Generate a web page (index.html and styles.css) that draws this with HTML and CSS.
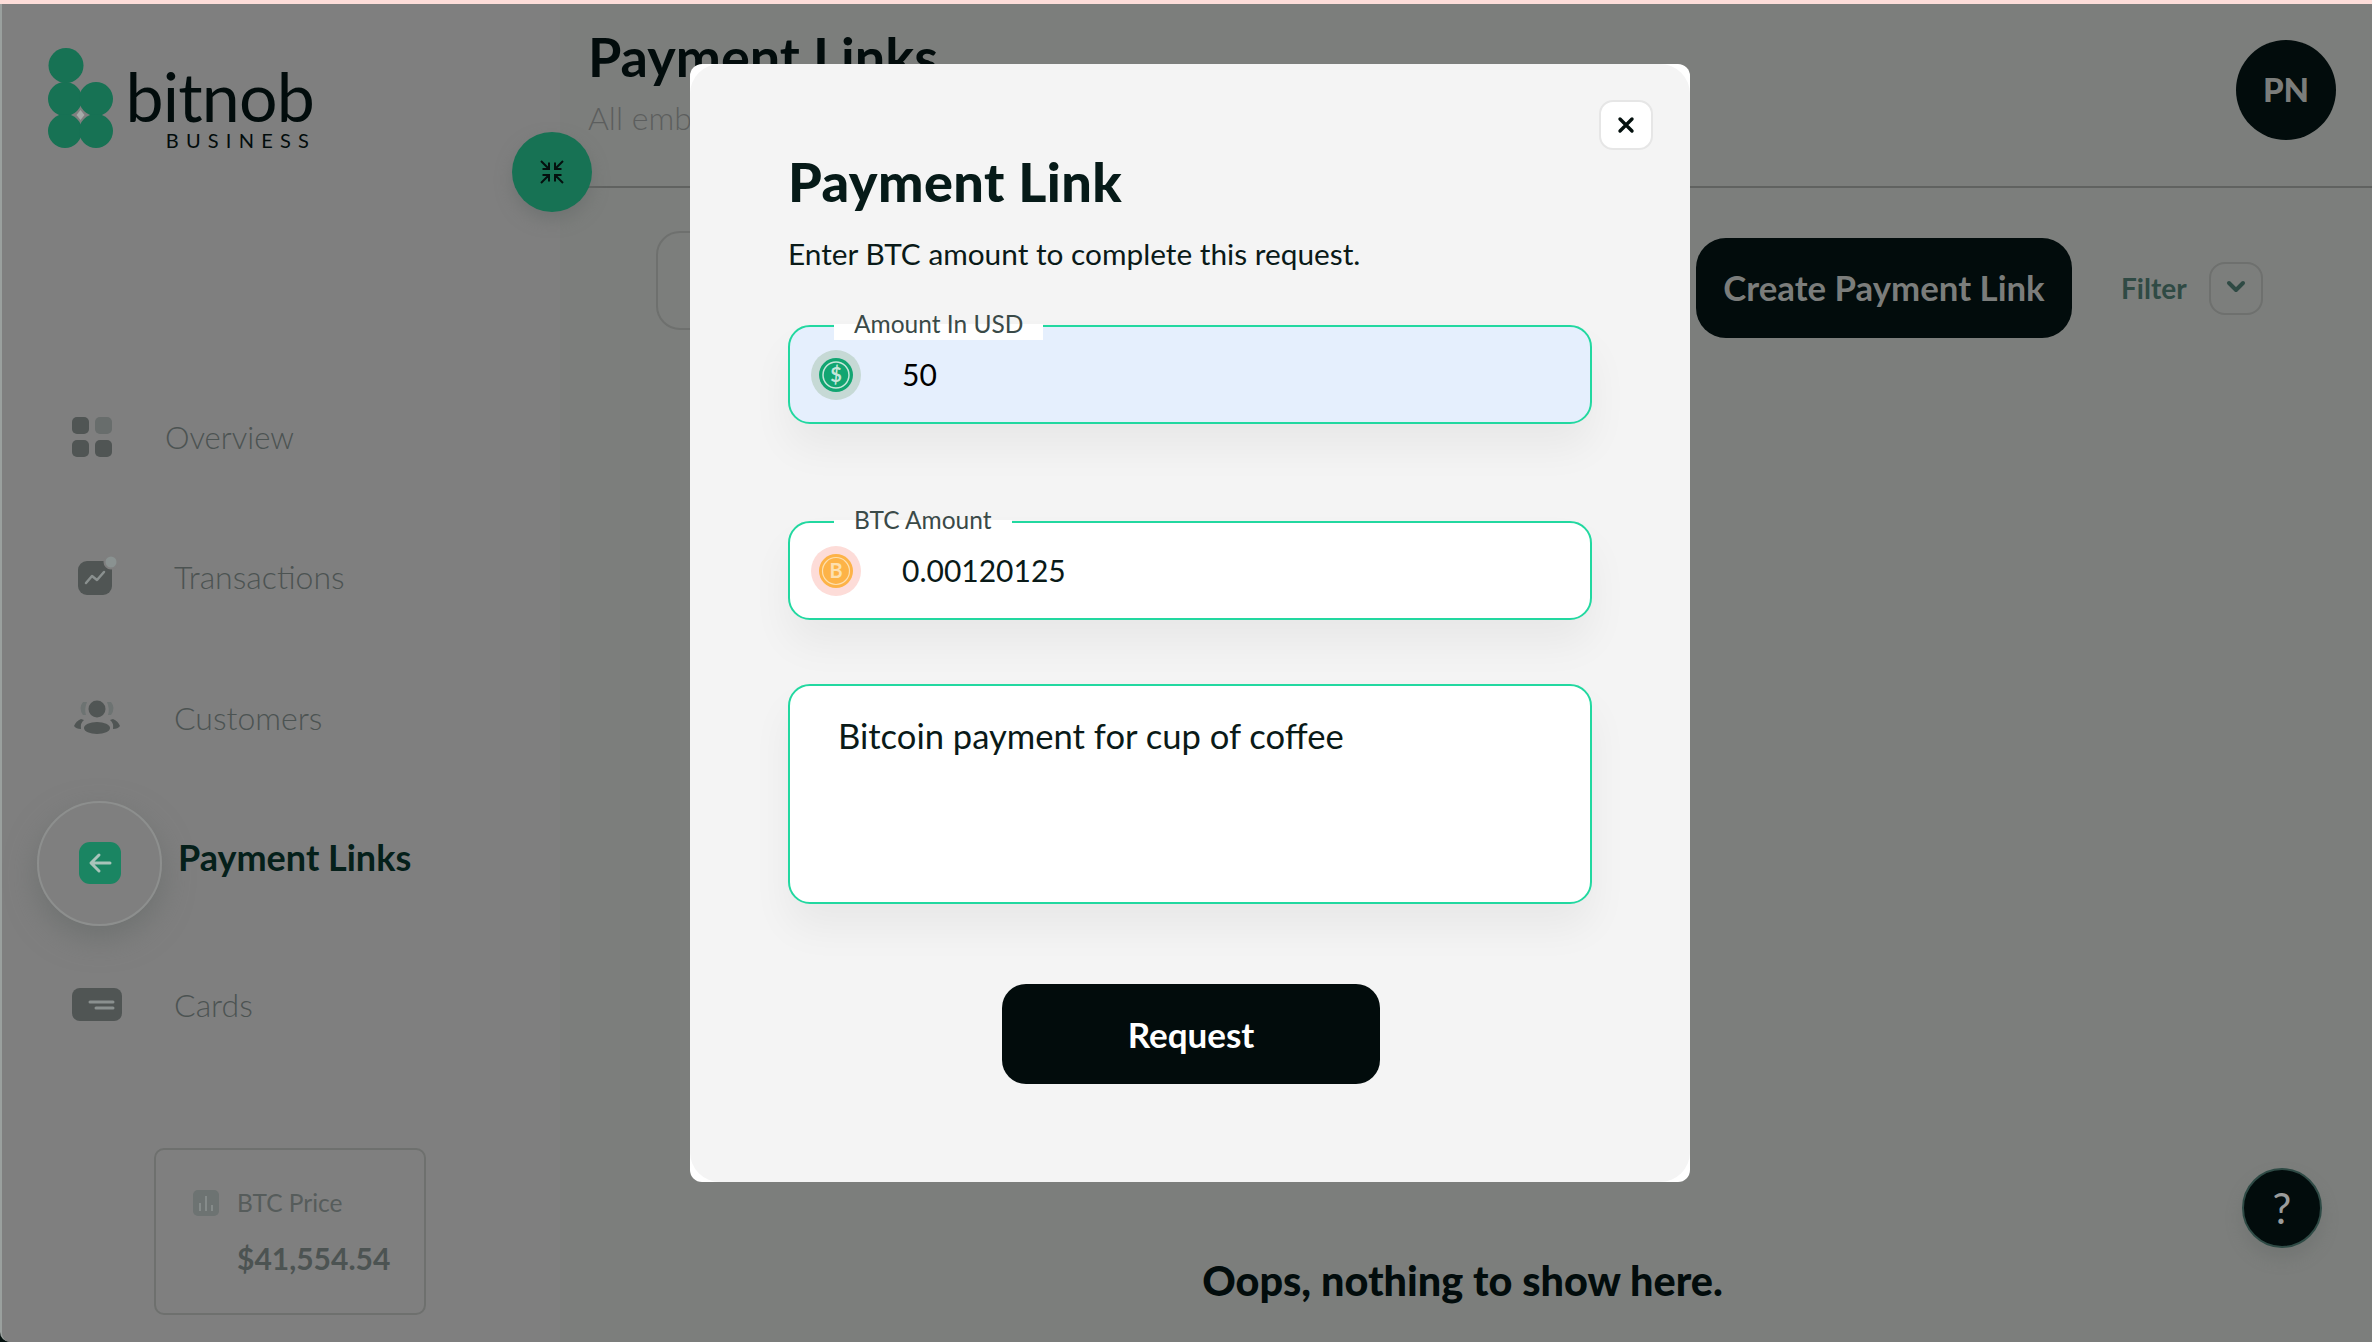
FILE: index.html
```html
<!DOCTYPE html>
<html lang="en">
<head>
  <meta charset="UTF-8">
  <meta name="viewport" content="width=device-width, initial-scale=1.0">
  <title>Payment Links</title>
  <link rel="stylesheet" href="styles.css">
</head>
<body>
  <div class="top-strip"></div>

  <div class="app">
    <!-- Sidebar -->
    <aside class="sidebar">
      <div class="logo">
        <svg class="logo-mark" width="66" height="100" viewBox="0 0 66 100">
          <g fill="#177254">
            <ellipse cx="18" cy="17.5" rx="17.5" ry="17.5"/>
            <ellipse cx="17" cy="51" rx="17" ry="17"/>
            <ellipse cx="48" cy="51" rx="17" ry="17"/>
            <ellipse cx="17" cy="83" rx="17" ry="17"/>
            <ellipse cx="48" cy="83" rx="17" ry="17"/>
          </g>
          <path d="M32.500 62 l4 5 -4 5 -4 -5z" fill="#a5aaa8"/>
        </svg>
        <div class="logo-text">
          <span class="logo-name">bitnob</span>
          <span class="logo-sub">BUSINESS</span>
        </div>
      </div>

      <nav class="nav">
        <a class="nav-item nav-overview">
          <svg width="40" height="40" viewBox="0 0 40 40">
            <rect x="0" y="0" width="17" height="17" rx="5" fill="#505554"/>
            <rect x="23" y="0" width="17" height="17" rx="5" fill="#686d6c"/>
            <rect x="0" y="23" width="17" height="17" rx="5" fill="#505554"/>
            <rect x="23" y="23" width="17" height="17" rx="5" fill="#505554"/>
          </svg>
          <span>Overview</span>
        </a>
        <a class="nav-item nav-transactions">
          <svg width="40" height="40" viewBox="0 0 40 40">
            <rect x="0" y="5" width="34" height="34" rx="9" fill="#505554"/>
            <circle cx="33" cy="6" r="6.500" fill="#8a9291" stroke="#7f7f7f" stroke-width="2"/>
            <path d="M8 27 l6 -7 5 4 7 -8" fill="none" stroke="#8a908f" stroke-width="2.500" stroke-linecap="round" stroke-linejoin="round"/>
          </svg>
          <span>Transactions</span>
        </a>
        <a class="nav-item nav-customers">
          <svg width="46" height="34" viewBox="0 0 46 34">
            <path d="M9 2 q-5 6 0 13 h3 q-2 -6 1 -13z M37 2 q5 6 0 13 h-3 q2 -6 -1 -13z" fill="#6d7372"/>
            <circle cx="23" cy="9" r="8.500" fill="#505554"/>
            <ellipse cx="23" cy="28" rx="13" ry="6" fill="#505554"/>
            <path d="M7 19 q-5 2 -7 7 q2 3 7 3 q-1 -6 3 -9z M39 19 q5 2 7 7 q-2 3 -7 3 q1 -6 -3 -9z" fill="#505554"/>
          </svg>
          <span>Customers</span>
        </a>
        <a class="nav-item nav-active">
          <div class="active-ring">
            <svg width="42" height="42" viewBox="0 0 42 42">
              <rect width="42" height="42" rx="11" fill="#1a8562"/>
              <path d="M31 21 h-18 M20 13 l-8 8 8 8" fill="none" stroke="#a9c4ba" stroke-width="3" stroke-linecap="round" stroke-linejoin="round"/>
            </svg>
          </div>
          <span class="active-label">Payment Links</span>
        </a>
        <a class="nav-item nav-cards">
          <svg width="50" height="33" viewBox="0 0 50 33">
            <rect width="50" height="33" rx="8" fill="#505554"/>
            <path d="M18 14 h23 M24 20 h17" stroke="#8a908f" stroke-width="3" stroke-linecap="round"/>
          </svg>
          <span>Cards</span>
        </a>
      </nav>

      <div class="btc-card">
        <div class="btc-label">
          <svg width="26" height="26" viewBox="0 0 26 26">
            <rect width="26" height="26" rx="5" fill="#6d7372"/>
            <path d="M7 13 v8 M13 6 v15 M19 15 v6" stroke="#858b8a" stroke-width="2"/>
          </svg>
          <span>BTC Price</span>
        </div>
        <div class="btc-value">$41,554.54</div>
      </div>
    </aside>

    <!-- Main -->
    <main class="main">
      <header class="header">
        <div class="header-titles">
          <h1>Payment Links</h1>
          <p>All embedded payment links</p>
        </div>
        <div class="avatar">PN</div>
      </header>

      <section class="toolbar">
        <div class="search-box"></div>
        <button class="create-btn">Create Payment Link</button>
        <span class="filter-label">Filter</span>
        <button class="filter-btn">
          <svg width="20" height="14" viewBox="0 0 20 14">
            <path d="M3 3 l7 7 7 -7" fill="none" stroke="#2f4a44" stroke-width="4" stroke-linecap="round" stroke-linejoin="round"/>
          </svg>
        </button>
      </section>

      <p class="empty-text">Oops, nothing to show here.</p>
    </main>
  </div>

  <!-- Sidebar toggle -->
  <button class="collapse-btn">
    <svg width="26" height="26" viewBox="0 0 26 26">
      <path d="M2 2 l8 8 M10 3.500 v6.500 h-6.500 M24 2 l-8 8 M16 3.500 v6.500 h6.500 M2 24 l8 -8 M10 22.500 v-6.500 h-6.500 M24 24 l-8 -8 M16 22.500 v-6.500 h6.500" fill="none" stroke="#04100e" stroke-width="2"/>
    </svg>
  </button>

  <button class="help-btn">?</button>

  <!-- Payment link modal -->
  <div class="overlay">
    <div class="modal">
      <div class="modal-inner">
        <button class="close-btn">
          <svg width="18" height="18" viewBox="0 0 18 18">
            <path d="M3 3 l12 12 M15 3 l-12 12" stroke="#04100e" stroke-width="3.400" stroke-linecap="round"/>
          </svg>
        </button>
        <h2>Payment Link</h2>
        <p class="modal-sub">Enter BTC amount to complete this request.</p>

        <div class="field field-usd">
          <span class="field-label label-usd">Amount In USD</span>
          <svg class="coin" width="50" height="50" viewBox="0 0 50 50">
            <circle cx="25" cy="25" r="25" fill="#c6d9d5"/>
            <circle cx="25" cy="25" r="17" fill="#12a571"/>
            <circle cx="25" cy="25" r="13" fill="none" stroke="#c6e6da" stroke-width="1.500"/>
            <text x="25" y="32" text-anchor="middle" class="coin-text" fill="#c6e6da">$</text>
          </svg>
          <span class="field-value value-usd">50</span>
        </div>

        <div class="field field-btc">
          <span class="field-label label-btc">BTC Amount</span>
          <svg class="coin" width="50" height="50" viewBox="0 0 50 50">
            <circle cx="25" cy="25" r="25" fill="#fddcd8"/>
            <circle cx="25" cy="25" r="17" fill="#fdb347"/>
            <circle cx="25" cy="25" r="13.500" fill="none" stroke="#fde0b0" stroke-width="1.200"/>
            <text x="25" y="32" text-anchor="middle" class="coin-text" fill="#fde0b0">B</text>
          </svg>
          <span class="field-value">0.00120125</span>
        </div>

        <div class="note">Bitcoin payment for cup of coffee</div>

        <button class="request-btn">Request</button>
      </div>
    </div>
  </div>
</body>
</html>
```

FILE: styles.css
```css
* { box-sizing: border-box; }
html, body { margin: 0; height: 100%; }
body { position: relative; width: 2372px; height: 1342px; overflow: hidden; display: flex; flex-direction: column; background-color: #04100e; font-family: "Lato", "Noto Sans", sans-serif; color: #020c0c; }
h1, h2, p { margin: 0; }
button { border: none; padding: 0; font-family: inherit; }

.top-strip { height: 4px; background-color: #fdddd9; flex-shrink: 0; }
.app { flex: 1; display: flex; background-color: #7c7e7c; border-left: 2px solid #9aa09e; border-bottom-left-radius: 10px; overflow: hidden; }

/* Sidebar */
.sidebar { width: 558px; flex-shrink: 0; background-color: #7f7f7f; padding: 44px 0 0 46px; }
.logo { display: flex; height: 100px; }
.logo-text { display: flex; flex-direction: column; align-items: flex-end; margin-left: 16px; width: 184px; }
.logo-name { font-size: 68px; line-height: 64px; margin-top: 16px; letter-spacing: -0.8px; color: #020c0c; }
.logo-sub { font-size: 20px; line-height: 18px; margin-top: 3px; letter-spacing: 7.2px; color: #020c0c; margin-right: -2px; }

.nav { margin: 219px 0 0 -46px; }
.nav-item { display: flex; align-items: center; font-size: 32px; font-weight: 300; color: #4c5352; }
.nav-overview { height: 140px; padding-left: 70px; gap: 53px; font-size: 31px; }
.nav-transactions { height: 138px; padding-left: 76px; gap: 56px; }
.nav-customers { height: 144px; padding-left: 72px; gap: 54px; }
.nav-active { height: 142px; padding-left: 35px; gap: 16px; font-size: 36px; font-weight: 700; color: #05201a; }
.active-label { margin-bottom: 7px; }
.nav-cards { height: 146px; padding-left: 70px; gap: 52px; }
.active-ring { width: 125px; height: 125px; margin-top: 6px; border-radius: 50%; border: 2px solid #8d8f8e; display: flex; align-items: center; justify-content: center; box-shadow: 0 12px 30px rgba(100, 105, 103, 0.6); }

.btc-card { width: 272px; height: 167px; margin: 71px 0 0 106px; padding: 38px 0 0 37px; border: 2px solid #6e706e; border-radius: 10px; }
.btc-label { display: flex; align-items: center; gap: 18px; font-size: 24.5px; color: #565c5b; }
.btc-value { margin: 23px 0 0 44px; font-size: 30px; font-weight: 700; color: #4c5352; }

/* Main */
.main { flex: 1; display: flex; flex-direction: column; }
.header { height: 184px; display: flex; justify-content: space-between; padding: 0 36px 0 28px; border-bottom: 2px solid #606260; }
.header-titles h1 { font-size: 54px; line-height: 64px; margin-top: 21px; font-weight: 700; }
.header-titles p { font-size: 32px; line-height: 40px; margin-top: 9px; font-weight: 300; color: #5c5e5e; }
.avatar { width: 100px; height: 100px; margin-top: 36px; padding-bottom: 3px; border-radius: 50%; background-color: #020c0c; color: #7b7d7b; font-size: 33px; font-weight: 900; display: flex; align-items: center; justify-content: center; }

.toolbar { display: flex; align-items: center; padding: 50px 0 0 96px; }
.search-box { width: 1010px; height: 99px; margin: -16px 30px 0 0; border: 2px solid #6e706e; border-radius: 24px; }
.create-btn { width: 376px; height: 100px; padding-bottom: 2px; border-radius: 30px; background-color: #020c0c; color: #7b7d7b; font-size: 34.8px; font-weight: 700; }
.filter-label { margin-left: 49px; font-size: 28px; font-weight: 700; color: #2f4a44; }
.filter-btn { width: 54px; height: 53px; margin-left: 22px; border: 2px solid #6e706e; border-radius: 16px; background: none; }

.empty-text { margin-top: 917px; padding-right: 7px; text-align: center; font-size: 41.4px; font-weight: 900; line-height: 50px; }

.collapse-btn { position: absolute; left: 512px; top: 132px; width: 80px; height: 80px; border-radius: 50%; background-color: #177254; box-shadow: 0 8px 16px rgba(100, 105, 103, 0.5); display: flex; align-items: center; justify-content: center; }
.help-btn { position: absolute; left: 2242px; top: 1168px; width: 80px; height: 80px; border-radius: 50%; background-color: #020c0c; border: 2px solid #2e4a45; color: #9a9c9b; font-size: 42px; font-weight: 400; box-shadow: 0 10px 16px rgba(100, 105, 103, 0.4); }

/* Modal */
.overlay { position: absolute; inset: 0; padding: 64px 0 0 690px; }
.modal { width: 1000px; height: 1118px; background-color: #fff; border-radius: 12px; }
.modal-inner { position: relative; height: 100%; padding: 90px 98px 0; background-color: #f4f4f4; border-radius: 30px; }
.modal-inner h2 { font-size: 54px; line-height: 56px; font-weight: 900; letter-spacing: 0.45px; color: #061a18; }
.modal-sub { margin-top: 26px; font-size: 29.8px; line-height: 36px; color: #0a1a18; }
.close-btn { position: absolute; top: 36px; right: 37px; width: 54px; height: 50px; border: 2px solid #e6e6e6; border-radius: 14px; background-color: #fff; display: flex; align-items: center; justify-content: center; }

.field { position: relative; width: 804px; height: 99px; display: flex; align-items: center; padding-left: 21px; gap: 41px; border: 2px solid #22d8a0; border-radius: 22px; background-color: #fff; box-shadow: 0 24px 40px rgba(0, 0, 0, 0.05); }
.field-usd { margin-top: 53px; background-color: #e5effd; }
.field-btc { margin-top: 97px; }
.field-label { position: absolute; left: 44px; top: -3px; height: 16px; padding: 0 20px; line-height: 0; background-color: #fff; font-size: 24.5px; color: #3a4a48; display: flex; align-items: flex-start; }
.field-value { margin-bottom: 2px; font-size: 30px; color: #0a1a18; }
.value-usd { color: #000; }
.coin-text { font-family: "Lato", sans-serif; font-size: 20px; font-weight: 700; }

.note { margin-top: 64px; width: 804px; height: 220px; padding: 30px 48px; border: 2px solid #22d8a0; border-radius: 22px; background-color: #fff; font-size: 34.6px; line-height: 40px; color: #0a1a18; box-shadow: 0 24px 40px rgba(0, 0, 0, 0.05); }

.request-btn { display: block; width: 378px; height: 100px; margin: 80px 0 0 214px; border-radius: 24px; background-color: #020c0c; color: #fff; font-size: 35px; font-weight: 700; }
```
